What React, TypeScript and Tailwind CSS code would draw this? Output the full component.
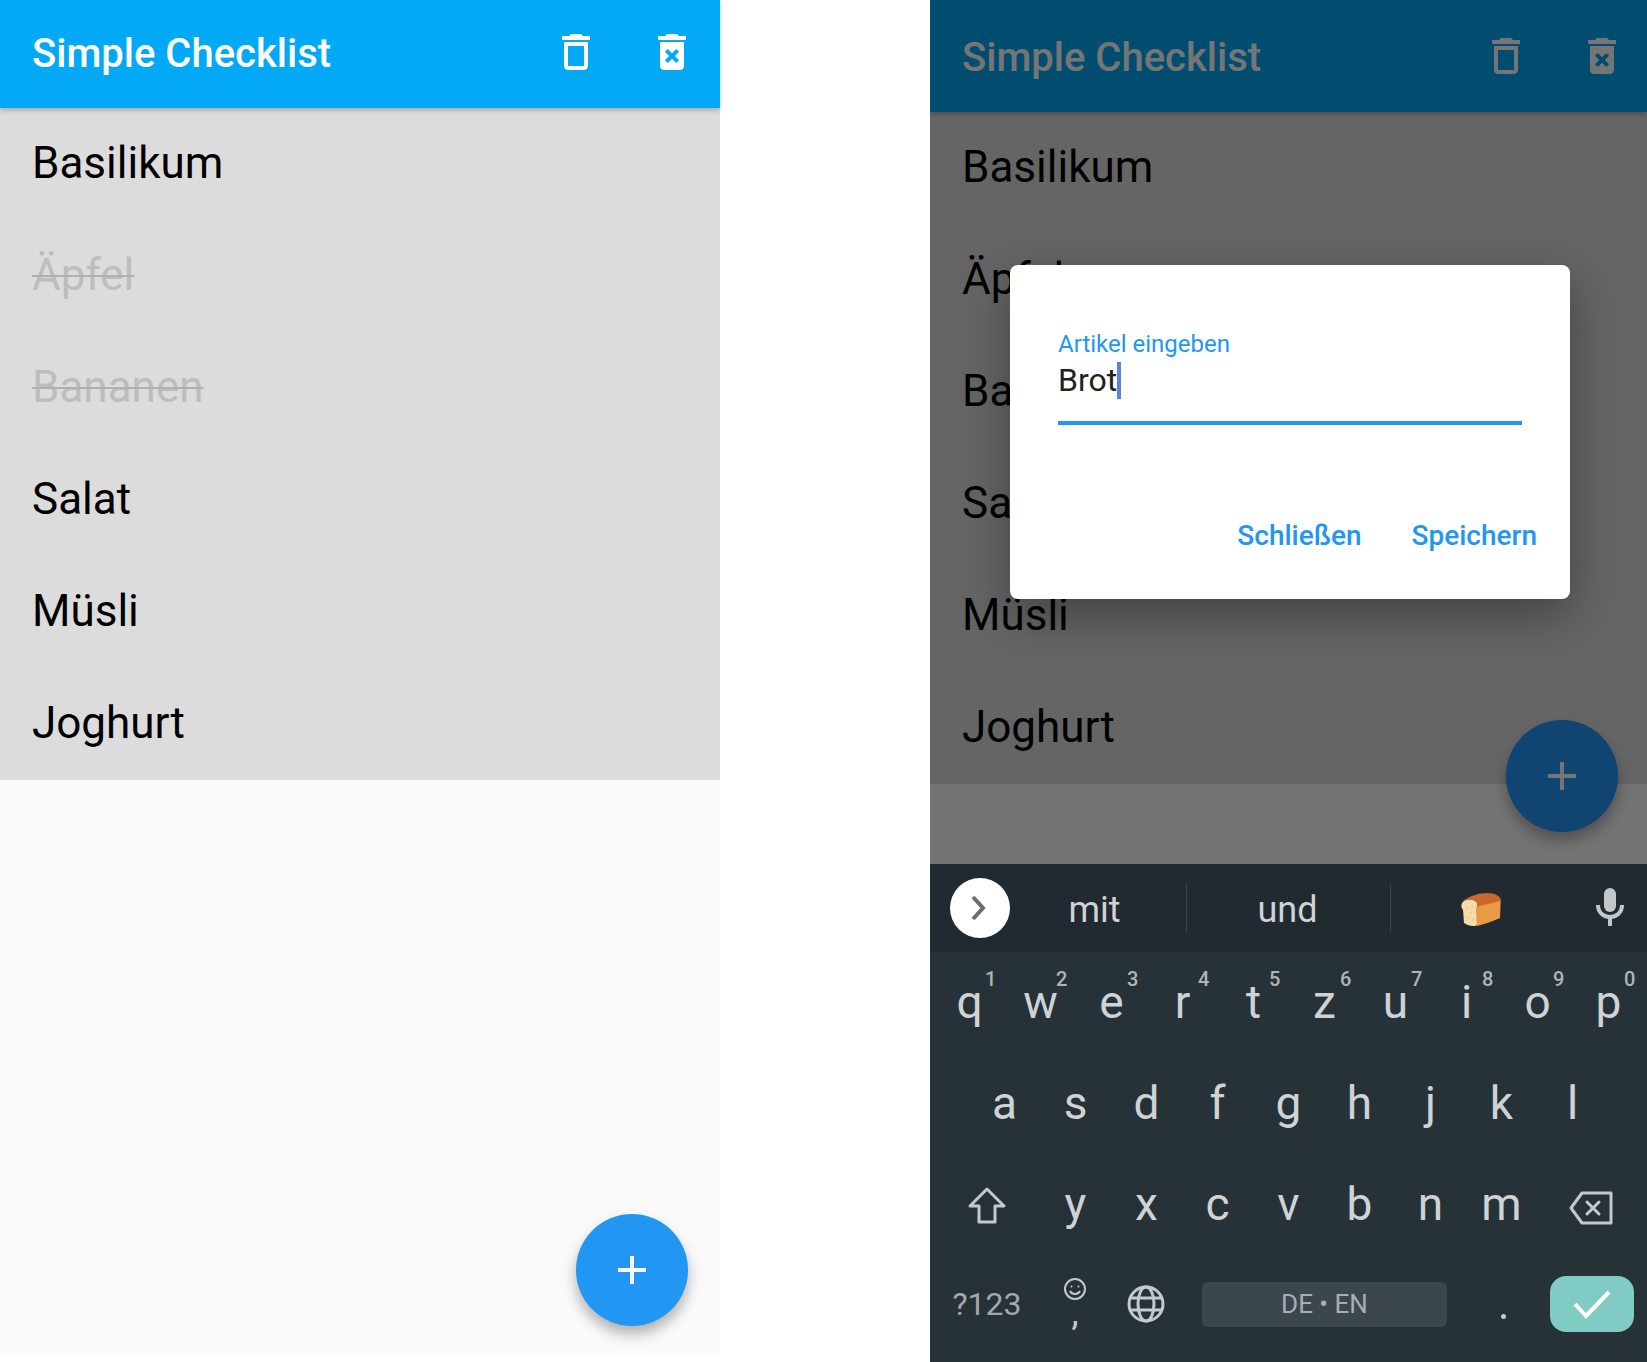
import React from "react";

const roboto = "font-['Roboto',sans-serif]";

function DeleteIcon() {
  return (
    <svg viewBox="0 0 24 24" className="w-12 h-12 fill-current">
      <path d="M6 19c0 1.1.9 2 2 2h8c1.1 0 2-.9 2-2V7H6v12zM8 9h8v10H8V9zm7.5-5l-1-1h-5l-1 1H5v2h14V4h-3.5z" />
    </svg>
  );
}
function DeleteForeverIcon() {
  return (
    <svg viewBox="0 0 24 24" className="w-12 h-12 fill-current">
      <path d="M6 19c0 1.1.9 2 2 2h8c1.1 0 2-.9 2-2V7H6v12zm2.46-7.12l1.41-1.41L12 12.59l2.12-2.12 1.41 1.41L13.41 14l2.12 2.12-1.41 1.41L12 15.41l-2.12 2.12-1.41-1.41L10.59 14l-2.13-2.12zM15.5 4l-1-1h-5l-1 1H5v2h14V4z" />
    </svg>
  );
}
function AddIcon() {
  return (
    <svg viewBox="0 0 24 24" className="w-12 h-12 fill-white">
      <path d="M19 13h-6v6h-2v-6H5v-2h6V5h2v6h6v2z" />
    </svg>
  );
}

const items = ["Basilikum", "Äpfel", "Bananen", "Salat", "Müsli", "Joghurt"];

function Checklist({ headerClass, iconsClass, strike }: { headerClass: string; iconsClass: string; strike: boolean }) {
  return (
    <>
      <header className={`${headerClass} w-full bg-[#03a9f4] flex items-center shrink-0 shadow-[0_2px_5px_rgba(0,0,0,0.25)] relative z-10`}>
        <h1 className="ml-8 text-[40px] leading-[48px] font-medium text-white">Simple Checklist</h1>
        <div className={`${iconsClass} ml-auto flex gap-12 text-white`}>
          <DeleteIcon />
          <DeleteForeverIcon />
        </div>
      </header>
      <ul className="bg-[#dcdcdc]">
        {items.map((t, i) => (
          <li
            key={t}
            className={`h-28 pl-8 pb-[2px] flex items-center text-[44px] leading-[52px] ${
              strike && (i === 1 || i === 2)
                ? "text-[#bdbdbd] line-through decoration-[#b0b0b0] decoration-2"
                : "text-black"
            }`}
          >
            {t}
          </li>
        ))}
      </ul>
    </>
  );
}

function Fab({ className }: { className: string }) {
  return (
    <div className={`${className} absolute w-28 h-28 rounded-full bg-[#2196f3] flex items-center justify-center shadow-[0_8px_14px_rgba(0,0,0,0.3)]`}>
      <AddIcon />
    </div>
  );
}

function Bread() {
  return (
    <svg viewBox="0 0 40 34" className="w-10 h-[34px]">
      <path d="M2 8 C8 3 18 0 26 0 C34 0 40 3 40 8 L39 25 L16 33 L14 12 Z" fill="#c8682c" />
      <path d="M15 14 L39 8 L39 25 C32 28 24 31 16 33 Z" fill="#ea9a45" />
      <path d="M1 10 C4 6 12 6 15 9 C17 11 16 14 15 15 L16 31 C16 33 14 33 12 33 C9 33 6 32 3 30 L2 17 C0 15 0 12 1 10 Z" fill="#f5dca8" />
      <circle cx="6" cy="15" r="0.7" fill="#d8b070" />
      <circle cx="10" cy="20" r="0.7" fill="#d8b070" />
      <circle cx="7" cy="25" r="0.7" fill="#d8b070" />
      <circle cx="12" cy="27" r="0.7" fill="#d8b070" />
      <circle cx="11" cy="13" r="0.7" fill="#d8b070" />
    </svg>
  );
}

function Key({ ch, digit }: { ch: string; digit?: string }) {
  return (
    <div className="relative w-[71px] shrink-0 text-center">
      {ch}
      {digit && (
        <span className="absolute left-[51px] top-[-7px] text-[20px] leading-6 font-medium text-[#b0b4b7]">{digit}</span>
      )}
    </div>
  );
}

function Keyboard() {
  const r1 = ["q", "w", "e", "r", "t", "z", "u", "i", "o", "p"];
  const d = ["1", "2", "3", "4", "5", "6", "7", "8", "9", "0"];
  return (
    <div className="flex-1 bg-[#263238] text-[#d0d3d6] text-[46px] leading-[56px] flex flex-col">
      <div className="flex pl-[4px] pt-[22px] h-[100px]">
        {r1.map((c, i) => (
          <Key key={c} ch={c} digit={d[i]} />
        ))}
      </div>
      <div className="flex pl-[39px] pt-[23px] h-[100px]">
        {["a", "s", "d", "f", "g", "h", "j", "k", "l"].map((c) => (
          <Key key={c} ch={c} />
        ))}
      </div>
      <div className="flex items-start pt-[24px] h-[102px]">
        <div className="w-[110px] shrink-0 flex justify-center pl-[3px] pt-[11px]">
          <svg viewBox="0 0 40 38" className="w-10 h-[38px]" fill="none" stroke="#c6c9cc" strokeWidth="3" strokeLinejoin="round">
            <path d="M20 2 L37 19 H28 V35 H12 V19 H3 Z" />
          </svg>
        </div>
        {["y", "x", "c", "v", "b", "n", "m"].map((c) => (
          <Key key={c} ch={c} />
        ))}
        <div className="pl-[32px] pt-[15px]">
          <svg viewBox="0 0 44 34" className="w-11 h-[34px]" fill="none" stroke="#c6c9cc" strokeWidth="3" strokeLinejoin="round" strokeLinecap="round">
            <path d="M13 2 H42 V32 H13 L2 17 Z" />
            <path d="M18 11 L30 23 M30 11 L18 23" />
          </svg>
        </div>
      </div>
      <div className="flex items-center h-[72px] mt-[14px]">
        <div className="w-[114px] shrink-0 text-center text-[32px] leading-10 text-[#a3a7ab]">?123</div>
        <div className="w-[62px] shrink-0 flex flex-col items-center mt-[-6px]">
          <svg viewBox="0 0 24 24" className="w-6 h-6" fill="none" stroke="#c6c9cc" strokeWidth="2">
            <circle cx="12" cy="12" r="10" />
            <circle cx="8.5" cy="9.5" r="1" fill="#c6c9cc" stroke="none" />
            <circle cx="15.5" cy="9.5" r="1" fill="#c6c9cc" stroke="none" />
            <path d="M7 14 C9 18 15 18 17 14" />
          </svg>
          <span className="text-[36px] leading-[24px] h-6 text-[#c6c9cc]">,</span>
        </div>
        <div className="w-20 shrink-0 flex justify-center">
          <svg viewBox="0 0 38 38" className="w-[38px] h-[38px]" fill="none" stroke="#c6c9cc" strokeWidth="3">
            <circle cx="19" cy="19" r="17" />
            <ellipse cx="19" cy="19" rx="8" ry="17" />
            <path d="M4 13 H34 M4 25 H34" />
          </svg>
        </div>
        <div className="ml-4 w-[245px] h-[45px] rounded-md bg-[#3c464d] flex items-center justify-center text-[26px] leading-8 text-[#a8adb1]">
          DE • EN
        </div>
        <div className="w-[103px] shrink-0 pl-[9px] flex justify-center pt-6">
          <span className="w-[5px] h-[5px] rounded-full bg-[#c6c9cc]" />
        </div>
        <div className="w-[84px] h-14 rounded-2xl bg-[#80cbc4] flex items-center justify-center">
          <svg viewBox="0 0 84 56" className="w-[84px] h-14" fill="none" stroke="#fff" strokeWidth="4">
            <path d="M25 28 L36 40 L59 16" />
          </svg>
        </div>
      </div>
    </div>
  );
}

function SuggestionBar() {
  return (
    <div className="h-[88px] bg-[#212a30] flex items-center shrink-0 text-[36px] leading-[44px] text-[#d0d3d6]">
      <div className="ml-5 w-[60px] h-[60px] rounded-full bg-white shrink-0">
        <svg viewBox="0 0 60 60" className="w-[60px] h-[60px]" fill="none" stroke="#6c6c6c" strokeWidth="4">
          <path d="M23 19 L33 30 L23 41" />
        </svg>
      </div>
      <div className="w-[176px] pr-[7px] pt-1 text-center">mit</div>
      <div className="w-px h-12 bg-[#3a444b]" />
      <div className="w-[203px] pr-[2px] pt-1 text-center">und</div>
      <div className="w-px h-12 bg-[#3a444b]" />
      <div className="w-[183px] pr-[4px] flex justify-center pt-1">
        <Bread />
      </div>
      <svg viewBox="0 0 28 38" className="w-7 h-[38px] ml-[22px] mt-[-2px]" fill="none" stroke="#c4c7ca">
        <rect x="8" y="0" width="12" height="24" rx="6" fill="#c4c7ca" stroke="none" />
        <path d="M2 17 C2 33 26 33 26 17" strokeWidth="4" />
        <path d="M14 29 V38" strokeWidth="4" />
      </svg>
    </div>
  );
}

export default function App() {
  return (
    <div className={`${roboto} w-[1647px] h-[1362px] bg-white flex items-start overflow-hidden`}>
      <section className="relative w-[720px] h-[1355px] bg-[#fafafa] flex flex-col shrink-0">
        <Checklist headerClass="h-[108px]" iconsClass="mr-6 mt-[-4px]" strike />
        <Fab className="right-8 bottom-[29px]" />
      </section>
      <section className="ml-[210px] w-[717px] h-[1362px] flex flex-col shrink-0">
        <div className="relative h-[864px] bg-[#fafafa] shrink-0 overflow-hidden">
          <Checklist headerClass="h-28 pt-1" iconsClass="mr-[21px] mt-[-4px]" strike={false} />
          <Fab className="right-[29px] bottom-8" />
          <div className="absolute inset-0 z-20 bg-black/[0.54]" />
          <div className="absolute z-30 left-20 top-[265px] w-[560px] h-[334px] bg-white rounded-lg shadow-[0_16px_48px_rgba(0,0,0,0.35)] flex flex-col">
            <div className="mx-12 mt-[65px] w-[464px] border-b-4 border-[#2196f3] h-[95px]">
              <div className="text-[24px] leading-7 text-[#2196f3]">Artikel eingeben</div>
              <div className="flex items-start mt-[4px] text-[32px] leading-[37px] text-[#212121]">
                <span>Brot</span>
                <span className="w-1 h-[37px] bg-[#5b83d8]" />
              </div>
            </div>
            <div className="flex justify-end gap-[50px] mr-[33px] mt-[95px] text-[28px] leading-8 font-medium text-[#2196f3]">
              <span>Schließen</span>
              <span>Speichern</span>
            </div>
          </div>
        </div>
        <SuggestionBar />
        <Keyboard />
      </section>
    </div>
  );
}
